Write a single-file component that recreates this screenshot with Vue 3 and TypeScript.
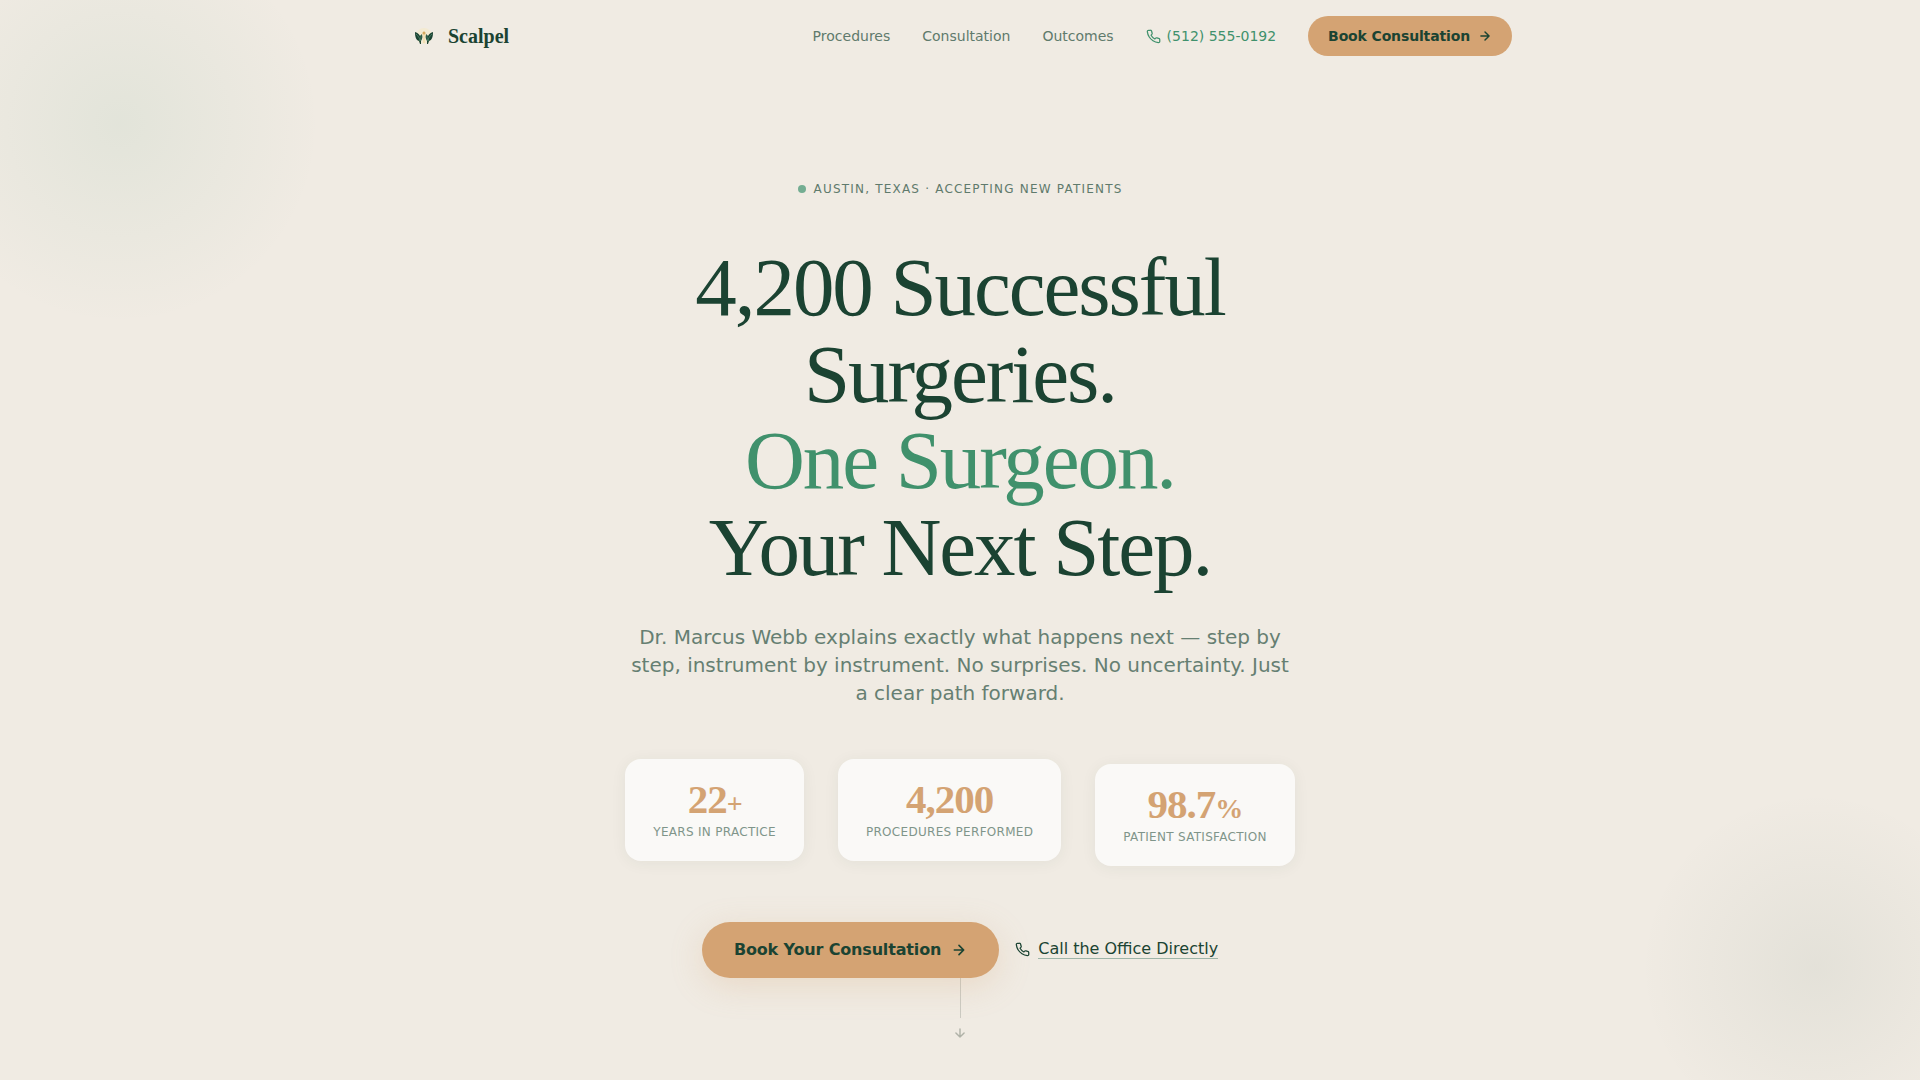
<script setup lang="ts">
interface Stat {
  value: string
  suffix: string
  label: string
  lowered: boolean
}

const links: { label: string; href: string }[] = [
  { label: 'Procedures', href: '#procedures' },
  { label: 'Consultation', href: '#consultation' },
  { label: 'Outcomes', href: '#outcomes' },
]

const stats: Stat[] = [
  { value: '22', suffix: '+', label: 'Years in practice', lowered: false },
  { value: '4,200', suffix: '', label: 'Procedures performed', lowered: false },
  { value: '98.7', suffix: '%', label: 'Patient satisfaction', lowered: true },
]

const phonePath =
  'M22 16.92v3a2 2 0 0 1-2.18 2 19.79 19.79 0 0 1-8.63-3.07 19.5 19.5 0 0 1-6-6 19.79 19.79 0 0 1-3.07-8.67A2 2 0 0 1 4.11 2h3a2 2 0 0 1 2 1.72 12.84 12.84 0 0 0 .7 2.81 2 2 0 0 1-.45 2.11L8.09 9.91a16 16 0 0 0 6 6l1.27-1.27a2 2 0 0 1 2.11-.45 12.84 12.84 0 0 0 2.81.7A2 2 0 0 1 22 16.92z'
</script>

<template>
  <div class="page">
    <header class="nav">
      <a class="brand" href="#">
        <svg class="brand-mark" viewBox="0 0 32 32" aria-hidden="true">
          <circle cx="16" cy="16" r="8" fill="#f3ead2" />
          <path d="M7 12c3 1 4 2 5 4l2-2c1 3 0 5-1 7v3h-1l-1-3c-3-1-4-4-4-9z" fill="#1b4332" />
          <path d="M8 14c2 2 4 4 4 7M13 15c0 3 0 4-1 6" fill="none" stroke="#4f8a70" stroke-width="0.8" />
          <path d="M25 12c-3 1-4 2-5 4l-2-2c-1 3 0 5 1 7v3h1l1-3c3-1 4-4 4-9z" fill="#1b4332" />
          <path d="M24 14c-2 2-4 4-4 7M19 15c0 3 0 4 1 6" fill="none" stroke="#4f8a70" stroke-width="0.8" />
          <path d="M16 11l2 3-1 3v6h-2v-6l-1-3z" fill="#f1dfb4" />
          <circle cx="16" cy="13" r="1.5" fill="#d4a85f" />
        </svg>
        <span>Scalpel</span>
      </a>
      <nav class="links" aria-label="Main">
        <a v-for="l in links" :key="l.label" class="link" :href="l.href">{{ l.label }}</a>
        <a class="link phone" href="tel:+15125550192">
          <svg class="icon" width="15" height="15" viewBox="0 0 24 24" aria-hidden="true"><path :d="phonePath" /></svg>
          <span>(512) 555-0192</span>
        </a>
        <button class="btn btn-small" type="button">
          Book Consultation
          <svg class="icon arrow" width="14" height="14" viewBox="0 0 24 24" aria-hidden="true"><path d="M5 12h14M12 5l7 7-7 7" /></svg>
        </button>
      </nav>
    </header>

    <main class="hero">
      <p class="badge"><span class="dot"></span>Austin, Texas · Accepting New Patients</p>
      <h1 class="title">
        4,200 Successful Surgeries.<br /><span class="accent">One Surgeon.</span><br />Your Next Step.
      </h1>
      <p class="lead">
        Dr. Marcus Webb explains exactly what happens next — step by step, instrument by instrument.
        No surprises. No uncertainty. Just a clear path forward.
      </p>
      <div class="stats">
        <div v-for="s in stats" :key="s.label" class="stat" :class="{ lowered: s.lowered }">
          <div class="value">{{ s.value }}<span v-if="s.suffix" class="suffix">{{ s.suffix }}</span></div>
          <div class="label">{{ s.label }}</div>
        </div>
      </div>
      <div class="actions">
        <button class="btn btn-large" type="button">
          Book Your Consultation
          <svg class="icon arrow" width="16" height="16" viewBox="0 0 24 24" aria-hidden="true"><path d="M5 12h14M12 5l7 7-7 7" /></svg>
        </button>
        <a class="call" href="tel:+15125550192">
          <svg class="icon" width="15" height="15" viewBox="0 0 24 24" aria-hidden="true"><path :d="phonePath" /></svg>
          <span class="call-text">Call the Office Directly</span>
        </a>
      </div>
      <div class="cue" aria-hidden="true">
        <span class="cue-line"></span>
        <svg class="icon arrow" width="14" height="14" viewBox="0 0 24 24"><path d="M12 5v14M5 12l7 7 7-7" /></svg>
      </div>
    </main>
  </div>
</template>

<style>
body {
  margin: 0;
  background: #f0ebe3;
}
</style>

<style scoped>
.page {
  min-height: 100vh;
  box-sizing: border-box;
  display: flex;
  flex-direction: column;
  color: #1b4332;
  font-family: "DejaVu Sans", sans-serif;
  background:
    radial-gradient(circle 200px at 120px 124px, rgba(64, 145, 108, 0.08), transparent),
    radial-gradient(circle 176px at calc(100% - 104px) calc(100% - 112px), rgba(27, 67, 50, 0.06), transparent),
    #f0ebe3;
}
a {
  color: inherit;
  text-decoration: none;
}
.icon {
  flex: none;
  fill: none;
  stroke: currentColor;
  stroke-width: 2;
  stroke-linecap: round;
  stroke-linejoin: round;
}
.arrow {
  stroke-width: 2.5;
}
.nav {
  width: 100%;
  max-width: 1200px;
  height: 72px;
  margin: 0 auto;
  padding: 0 48px;
  box-sizing: border-box;
  display: flex;
  align-items: center;
  justify-content: space-between;
}
.brand {
  display: flex;
  align-items: center;
  gap: 8px;
  font: 700 20px/24px "Liberation Serif", serif;
}
.brand-mark {
  width: 32px;
  height: 32px;
}
.links {
  display: flex;
  align-items: center;
  gap: 32px;
  font-size: 14px;
  line-height: 20px;
}
.link {
  color: #5f7a6c;
}
.link.phone {
  display: flex;
  align-items: center;
  gap: 6px;
  color: #40916c;
}
.btn {
  display: flex;
  align-items: center;
  border: 0;
  border-radius: 28px;
  background: #d4a373;
  color: #1b4332;
  font-family: inherit;
  font-weight: 700;
  letter-spacing: -0.01em;
  cursor: pointer;
}
.btn-small {
  height: 40px;
  padding: 0 20px;
  gap: 8px;
  font-size: 14px;
}
.btn-large {
  height: 56px;
  padding: 0 32px;
  gap: 10px;
  font-size: 16px;
  box-shadow: 0 8px 32px rgba(212, 163, 115, 0.25);
}
.hero {
  position: relative;
  flex: 1;
  display: flex;
  flex-direction: column;
  align-items: center;
  padding: 102px 24px 96px;
  text-align: center;
}
.badge {
  display: flex;
  align-items: center;
  gap: 8px;
  margin: 0 0 40px;
  color: #5f7a6c;
  font-size: 12px;
  line-height: 30px;
  letter-spacing: 0.1em;
  text-transform: uppercase;
}
.dot {
  width: 8px;
  height: 8px;
  border-radius: 50%;
  background: #74ad92;
}
.title {
  max-width: 720px;
  margin: 0 0 32px;
  font: 400 83px/1.045 "Liberation Serif", serif;
  letter-spacing: -0.025em;
}
.accent {
  color: #40916c;
}
.lead {
  max-width: 660px;
  margin: 0 0 52px;
  color: #667f72;
  font-size: 20px;
  line-height: 28px;
}
.stats {
  display: flex;
  align-items: flex-start;
  gap: 34px;
  margin-bottom: 56px;
}
.stat {
  padding: 20px 28px;
  border-radius: 16px;
  background: #faf9f7;
  box-shadow: 0 2px 16px rgba(27, 67, 50, 0.06);
}
.lowered {
  margin-top: 5px;
}
.value {
  color: #d4a373;
  font: 700 41px/40px "Liberation Serif", serif;
  letter-spacing: -1px;
}
.suffix {
  font-size: 28px;
  line-height: 28px;
}
.label {
  margin-top: 4px;
  color: #7f958a;
  font-size: 12px;
  line-height: 18px;
  letter-spacing: 0.025em;
  text-transform: uppercase;
}
.actions {
  position: relative;
  z-index: 1;
  display: flex;
  align-items: center;
  gap: 16px;
}
.call {
  display: flex;
  align-items: center;
  gap: 8px;
  font-size: 16px;
  line-height: 18px;
}
.call-text {
  border-bottom: 1px solid #9db5a8;
}
.cue {
  position: absolute;
  bottom: 40px;
  left: 50%;
  transform: translateX(-50%);
  display: flex;
  flex-direction: column;
  align-items: center;
  gap: 8px;
  color: #b0b2a8;
}
.cue-line {
  width: 1px;
  height: 40px;
  background: #cbcac2;
}
</style>
